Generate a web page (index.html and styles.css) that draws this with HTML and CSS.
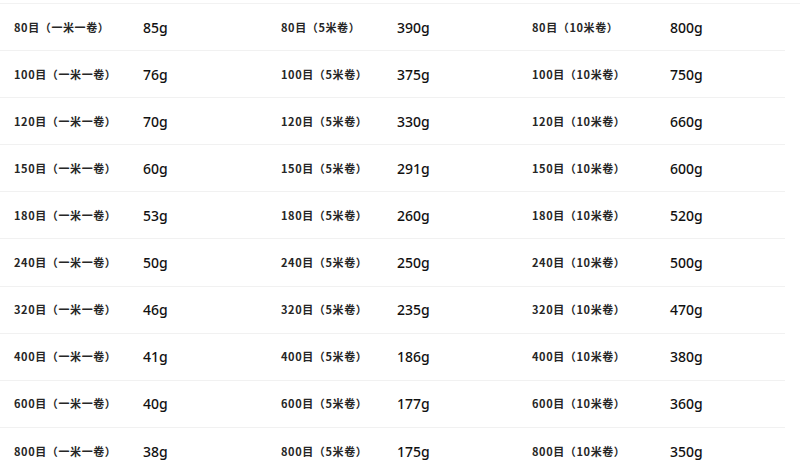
FILE: index.html
```html
<!DOCTYPE html>
<html lang="zh-CN">
<head>
<meta charset="utf-8">
<title>目数重量表</title>
<link rel="stylesheet" href="styles.css">
</head>
<body>
<div class="table">
  <div class="row"><span class="lab">80目（一米一卷）</span><span class="val">85g</span><span class="lab">80目（5米卷）</span><span class="val">390g</span><span class="lab">80目（10米卷）</span><span class="val">800g</span></div>
  <div class="row"><span class="lab">100目（一米一卷）</span><span class="val">76g</span><span class="lab">100目（5米卷）</span><span class="val">375g</span><span class="lab">100目（10米卷）</span><span class="val">750g</span></div>
  <div class="row"><span class="lab">120目（一米一卷）</span><span class="val">70g</span><span class="lab">120目（5米卷）</span><span class="val">330g</span><span class="lab">120目（10米卷）</span><span class="val">660g</span></div>
  <div class="row"><span class="lab">150目（一米一卷）</span><span class="val">60g</span><span class="lab">150目（5米卷）</span><span class="val">291g</span><span class="lab">150目（10米卷）</span><span class="val">600g</span></div>
  <div class="row"><span class="lab">180目（一米一卷）</span><span class="val">53g</span><span class="lab">180目（5米卷）</span><span class="val">260g</span><span class="lab">180目（10米卷）</span><span class="val">520g</span></div>
  <div class="row"><span class="lab">240目（一米一卷）</span><span class="val">50g</span><span class="lab">240目（5米卷）</span><span class="val">250g</span><span class="lab">240目（10米卷）</span><span class="val">500g</span></div>
  <div class="row"><span class="lab">320目（一米一卷）</span><span class="val">46g</span><span class="lab">320目（5米卷）</span><span class="val">235g</span><span class="lab">320目（10米卷）</span><span class="val">470g</span></div>
  <div class="row"><span class="lab">400目（一米一卷）</span><span class="val">41g</span><span class="lab">400目（5米卷）</span><span class="val">186g</span><span class="lab">400目（10米卷）</span><span class="val">380g</span></div>
  <div class="row"><span class="lab">600目（一米一卷）</span><span class="val">40g</span><span class="lab">600目（5米卷）</span><span class="val">177g</span><span class="lab">600目（10米卷）</span><span class="val">360g</span></div>
  <div class="row"><span class="lab">800目（一米一卷）</span><span class="val">38g</span><span class="lab">800目（5米卷）</span><span class="val">175g</span><span class="lab">800目（10米卷）</span><span class="val">350g</span></div>
</div>
</body>
</html>
```
FILE: styles.css
```css
html, body {
  margin: 0;
  padding: 0;
  background: #ffffff;
}
body {
  width: 800px;
  height: 474px;
  overflow: hidden;
}
.table {
  border-top: 1px solid #f2f2f2;
  margin-top: 3px;
  display: flex;
  flex-direction: column;
}
.row {
  display: grid;
  grid-template-columns: 129px 138px 116px 135px 138px 1fr;
  height: 47.1px;
  padding-left: 14px;
  align-items: center;
  border-bottom: 1px solid #f1f1f1;
  box-sizing: border-box;
  margin-right: 15px;
}
.row:last-child {
  border-bottom: none;
}
.lab {
  font-family: "Noto Sans CJK SC", "Noto Sans", sans-serif;
  font-weight: 700;
  font-size: 11px;
  color: #262626;
  white-space: nowrap;
  letter-spacing: 0.6px;
  margin-top: -1px;
}
.val {
  font-family: "Noto Sans", "Liberation Sans", sans-serif;
  font-weight: 500;
  font-size: 14px;
  color: #111111;
  white-space: nowrap;
}
```
